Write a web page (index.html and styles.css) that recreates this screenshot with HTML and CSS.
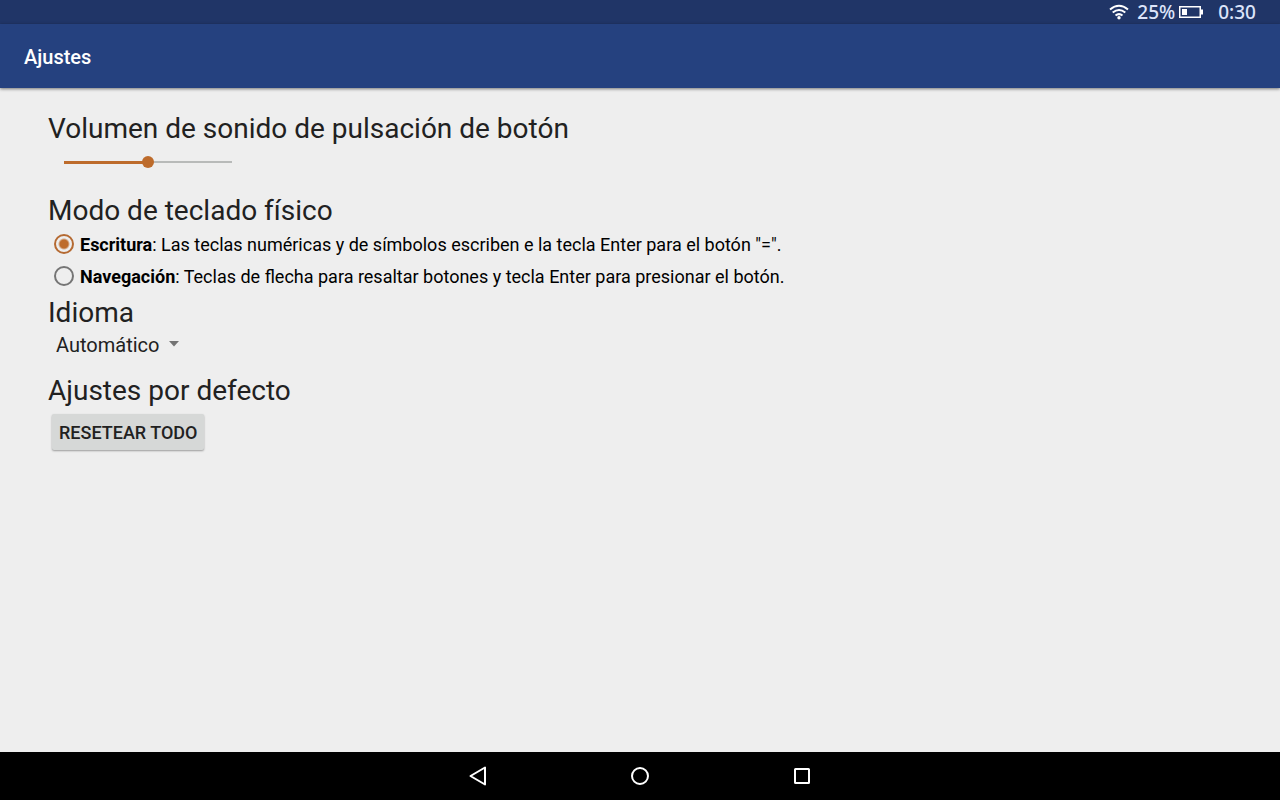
FILE: index.html
```
<!DOCTYPE html>
<html lang="es">
<head>
    <meta charset="UTF-8">
    <title>Ajustes</title>
    <meta name="viewport" content="width=device-width, initial-scale=1">
    <link rel="stylesheet" href="styles.css">
</head>
<body>
    <div class="status-bar">
        <svg class="wifi" width="20" height="16" viewBox="0 0 20 16" aria-hidden="true">
            <path d="M1 5.5Q10 -2 19 5.5M3.7 8.6Q10 3.4 16.3 8.6M6.5 11.6Q10 8.6 13.5 11.6"/>
            <circle cx="10" cy="13.7" r="1.7"/>
        </svg>
        <span class="percent">25%</span>
        <svg class="battery" width="25" height="12" viewBox="0 0 25 12" aria-hidden="true">
            <path d="M.75.75h20.5v10.5H.75z" fill="none" stroke="#fff" stroke-width="1.5"/>
            <path d="M3 3h5v6H3zM22 3.5h2v5h-2z" fill="#fff"/>
        </svg>
        <span class="clock">0:30</span>
    </div>
    <header class="app-bar">
        <h1>Ajustes</h1>
    </header>
    <main>
        <section class="volume">
            <h2><label for="volume">Volumen de sonido de pulsación de botón</label></h2>
            <input type="range" id="volume" min="0" max="100" value="50">
        </section>
        <section class="keyboard" role="radiogroup" aria-labelledby="keyboard-title">
            <h2 id="keyboard-title">Modo de teclado físico</h2>
            <label class="option">
                <input type="radio" name="keyboard" value="write" checked>
                <span><b>Escritura</b>: Las teclas numéricas y de símbolos escriben e la tecla Enter para el botón "=".</span>
            </label>
            <label class="option">
                <input type="radio" name="keyboard" value="navigate">
                <span><b>Navegación</b>: Teclas de flecha para resaltar botones y tecla Enter para presionar el botón.</span>
            </label>
        </section>
        <section class="language">
            <h2><label for="language">Idioma</label></h2>
            <div class="spinner">
                <select id="language">
                    <option>Automático</option>
                </select>
                <svg width="10" height="8" viewBox="0 0 10 8" aria-hidden="true"><path d="M0 0h10L5 5.5z" fill="#737373"/></svg>
            </div>
        </section>
        <section class="defaults">
            <h2>Ajustes por defecto</h2>
            <button type="button" class="reset">RESETEAR TODO</button>
        </section>
    </main>
    <nav class="nav-bar">
        <button type="button" aria-label="Atrás">
            <svg width="20" height="20" viewBox="0 0 20 20"><path d="M17 1.5v17L2.5 10z"/></svg>
        </button>
        <button type="button" aria-label="Inicio">
            <svg width="20" height="20" viewBox="0 0 20 20"><circle cx="10" cy="10" r="8"/></svg>
        </button>
        <button type="button" aria-label="Recientes">
            <svg width="20" height="20" viewBox="0 0 20 20"><rect x="3" y="3" width="14" height="14" rx=".5"/></svg>
        </button>
    </nav>
</body>
</html>
```
FILE: styles.css
```
* {
    box-sizing: border-box;
}
body {
    margin: 0;
    min-height: 100vh;
    display: flex;
    flex-direction: column;
    background: #eee;
    color: #212121;
    font-family: Roboto, "Liberation Sans", sans-serif;
}
h1, h2 {
    margin: 0;
}
button, input, select {
    font-family: inherit;
    margin: 0;
}

/* status bar */
.status-bar {
    display: flex;
    align-items: center;
    justify-content: flex-end;
    height: 24px;
    padding-right: 24px;
    background: #203567;
    color: #dce4fa;
    font: 500 19px/22px "Noto Sans", sans-serif;
}
.wifi {
    margin-right: 8px;
    fill: none;
    stroke: #fff;
    stroke-width: 2;
}
.wifi circle {
    fill: #fff;
    stroke: none;
}
.percent {
    margin-right: 4px;
}
.battery {
    margin-right: 14px;
}

/* title */
.app-bar {
    display: flex;
    align-items: center;
    height: 64px;
    padding: 2px 24px 0;
    background: #25417f;
    box-shadow: 0 1px 3px rgba(0, 0, 0, 0.5);
}
h1 {
    color: #fff;
    font-size: 20px;
    font-weight: 500;
}

/* settings */
main {
    flex: 1;
    padding: 24px 48px;
}
h2 {
    font-size: 28px;
    font-weight: 400;
    line-height: 34px;
}
.volume {
    margin-bottom: 16px;
}
.volume input {
    display: block;
    width: 168px;
    height: 32px;
    margin-left: 16px;
    appearance: none;
    background: linear-gradient(#bd6b2b, #bd6b2b) 0 50% / 50% 3px no-repeat,
                linear-gradient(#b8bab9, #b8bab9) 0 50% / 100% 2px no-repeat;
}
.volume input::-webkit-slider-thumb {
    appearance: none;
    width: 12px;
    height: 12px;
    border-radius: 50%;
    background: #bd6b2b;
}
.keyboard {
    margin-bottom: 4px;
}
.option {
    display: flex;
    align-items: center;
    min-height: 32px;
    padding-left: 6px;
    gap: 6px;
    color: #000;
    font-size: 18px;
}
.option input {
    flex: none;
    width: 20px;
    height: 20px;
    appearance: none;
    border: 2px solid #757575;
    border-radius: 50%;
}
.option input:checked {
    border-color: #b56a32;
    background: radial-gradient(circle, #bd6b2b 4px, transparent 6px);
}
.language {
    margin-bottom: 14px;
}
.spinner {
    display: flex;
    align-items: center;
    height: 30px;
    padding-left: 8px;
    gap: 9px;
}
.spinner select {
    appearance: none;
    padding: 0;
    border: 0;
    background: none;
    color: #212121;
    font-size: 20px;
}
.reset {
    display: block;
    height: 36px;
    margin: 6px 4px;
    padding: 0 7px;
    border: 0;
    border-radius: 2px;
    background: #d6d8d7;
    box-shadow: 0 1px 2px rgba(0, 0, 0, 0.35);
    color: #212121;
    font-size: 18px;
    font-weight: 500;
}

/* navigation bar */
.nav-bar {
    display: flex;
    justify-content: center;
    gap: 114px;
    height: 48px;
    background: #000;
}
.nav-bar button {
    display: grid;
    place-items: center;
    width: 48px;
    padding: 0;
    border: 0;
    background: none;
}
.nav-bar svg {
    fill: none;
    stroke: #fff;
    stroke-width: 2;
    stroke-linejoin: round;
}
```
